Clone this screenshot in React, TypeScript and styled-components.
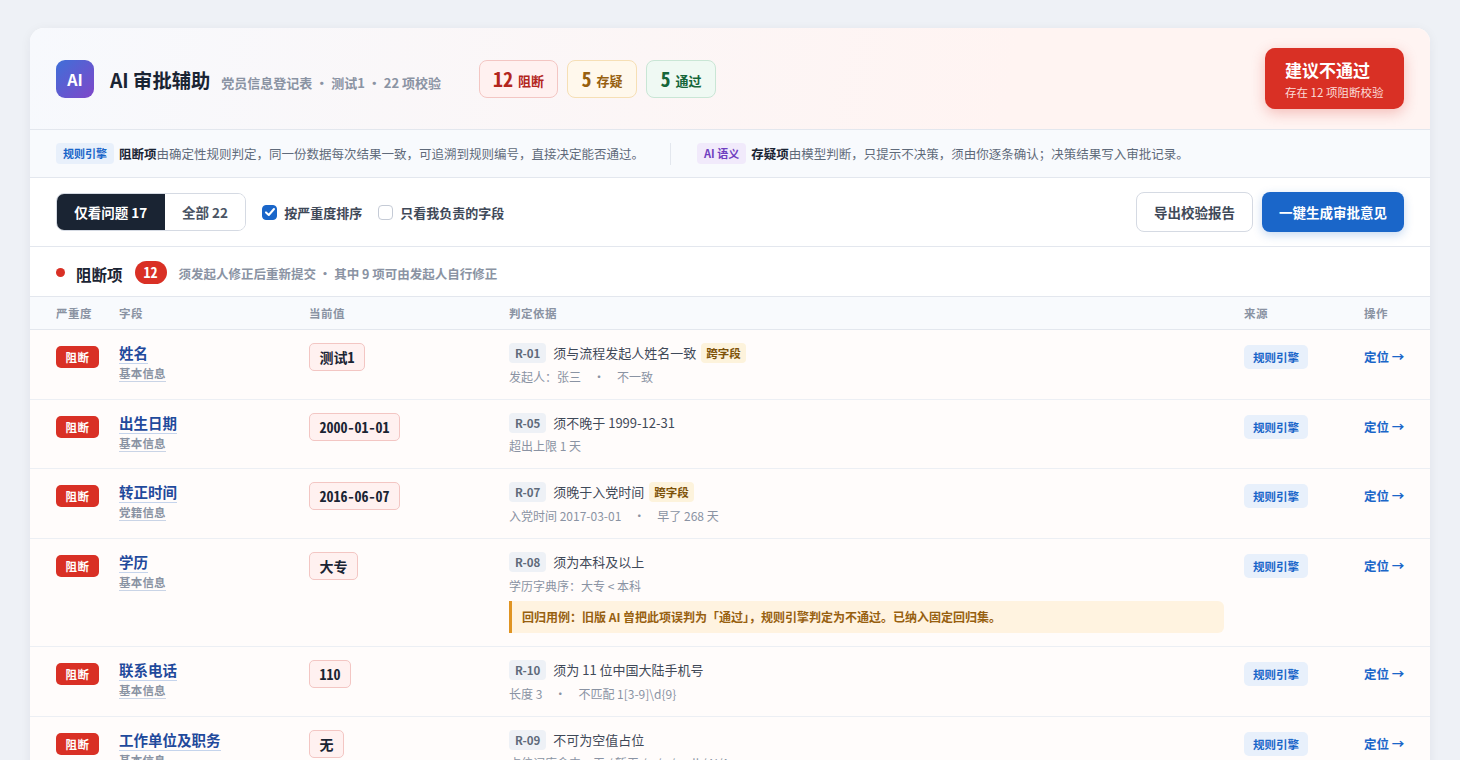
import React from "react";
import styled, { createGlobalStyle } from "styled-components";

const Global = createGlobalStyle`
  html, body { margin: 0; padding: 0; height: 760px; overflow: hidden; }
  body {
    background: #eef1f6;
    color: #1a2433;
    font-family: "Noto Sans CJK SC", "Noto Sans", sans-serif;
  }
  * { box-sizing: border-box; }
`;

const Page = styled.div`
  padding: 28px 30px;
`;

const Card = styled.div`
  background: #fff;
  border-radius: 14px;
  box-shadow: 0 2px 12px rgba(26, 36, 51, 0.06);
  overflow: hidden;
`;

const Header = styled.header`
  height: 102px;
  padding: 0 26px;
  display: flex;
  align-items: center;
  background: linear-gradient(100deg, #f7f9fd 0%, #fff4f2 70%, #fff4f2 100%);
  border-bottom: 1px solid #e3e7ee;
`;

const Logo = styled.div`
  width: 38px;
  height: 38px;
  border-radius: 9px;
  background: linear-gradient(135deg, #3f6fd8, #7f47c9);
  color: #fff;
  font-size: 16px;
  font-weight: 700;
  display: flex;
  align-items: center;
  justify-content: center;
`;

const TitleBlock = styled.div`
  display: flex;
  align-items: baseline;
  margin: 3px 0 0 16px;
`;

const Title = styled.h1`
  margin: 0;
  font-size: 19.3px;
  line-height: 28px;
  font-weight: 700;
  color: #1a2433;
`;

const Subtitle = styled.span`
  margin-left: 11px;
  font-size: 13px;
  font-weight: 600;
  color: #8a93a3;
  white-space: pre;
`;

const Stats = styled.div`
  display: flex;
  gap: 9px;
  margin-left: 38px;
`;

const tones = {
  red: { bg: "#fff1f0", line: "#f3c6c3", fg: "#b3261e" },
  amber: { bg: "#fff8ec", line: "#f6dfb5", fg: "#97600f" },
  green: { bg: "#eff9f3", line: "#c9e6d5", fg: "#17663a" },
};
type Tone = keyof typeof tones;

const Stat = styled.div<{ $tone: Tone }>`
  min-width: 70px;
  height: 38px;
  padding: 0 13px;
  display: flex;
  align-items: center;
  justify-content: center;
  gap: 5px;
  border-radius: 8px;
  border: 1px solid ${(p) => tones[p.$tone].line};
  background: ${(p) => tones[p.$tone].bg};
  color: ${(p) => tones[p.$tone].fg};
  font-size: 13px;
  font-weight: 700;
  b { font-size: 20px; font-weight: 700; line-height: 24px; font-feature-settings: "hwid"; }
  span { padding-top: 4px; }
`;

const Verdict = styled.div`
  margin-left: auto;
  width: 139px;
  height: 61px;
  padding: 0 20px;
  border-radius: 10px;
  background: #d93025;
  box-shadow: 0 4px 14px rgba(217, 48, 37, 0.28);
  color: #fff;
  display: flex;
  flex-direction: column;
  justify-content: center;
  strong { font-size: 17px; line-height: 24px; font-weight: 700; }
  span { margin-top: 2px; font-size: 11.5px; line-height: 16px; color: #fbdcd9; white-space: nowrap; }
`;

const Notes = styled.div`
  height: 48px;
  padding: 0 26px;
  display: flex;
  align-items: center;
  background: #f8fafd;
  border-bottom: 1px solid #e3e7ee;
  font-size: 12.5px;
  color: #5f6a7a;
`;

const NoteTag = styled.span<{ $ai?: boolean }>`
  padding: 0 7px;
  height: 21px;
  line-height: 21px;
  border-radius: 4px;
  font-size: 11px;
  font-weight: 700;
  margin-right: 5px;
  background: ${(p) => (p.$ai ? "#f1eafb" : "#e8f0fb")};
  color: ${(p) => (p.$ai ? "#6f3fc0" : "#1a66c9")};
`;

const NoteText = styled.span`
  b { color: #1a2433; font-weight: 700; }
`;

const NoteRule = styled.i`
  width: 1px;
  height: 22px;
  background: #e3e7ee;
  margin: 0 26px;
`;

const Toolbar = styled.div`
  height: 69px;
  padding: 0 26px;
  display: flex;
  align-items: center;
  border-bottom: 1px solid #e3e7ee;
`;

const Segments = styled.div`
  display: flex;
  height: 38px;
  border: 1px solid #d5dae3;
  border-radius: 8px;
  overflow: hidden;
`;

const Segment = styled.div<{ $on?: boolean }>`
  padding: 0 17.3px;
  display: flex;
  align-items: center;
  font-size: 13.5px;
  font-weight: 700;
  background: ${(p) => (p.$on ? "#1a2433" : "#fff")};
  color: ${(p) => (p.$on ? "#fff" : "#4a5464")};
`;

const Check = styled.label`
  display: flex;
  align-items: center;
  gap: 7px;
  margin-left: 16px;
  font-size: 13px;
  font-weight: 600;
  color: #3f4958;
`;

const Box = styled.span<{ $on?: boolean }>`
  width: 15px;
  height: 15px;
  border-radius: 4px;
  display: flex;
  align-items: center;
  justify-content: center;
  background: ${(p) => (p.$on ? "#1a66c9" : "#fff")};
  border: 1px solid ${(p) => (p.$on ? "#1a66c9" : "#c5cbd6")};
`;

const Actions = styled.div`
  margin-left: auto;
  display: flex;
  gap: 9px;
`;

const Button = styled.button<{ $primary?: boolean }>`
  height: 40px;
  padding: 0 17px;
  border-radius: 8px;
  font-family: inherit;
  font-size: 13.5px;
  font-weight: 700;
  border: ${(p) => (p.$primary ? "none" : "1px solid #d5dae3")};
  background: ${(p) => (p.$primary ? "#1a66c9" : "#fff")};
  color: ${(p) => (p.$primary ? "#fff" : "#3f4958")};
  box-shadow: ${(p) => (p.$primary ? "0 3px 10px rgba(26,102,201,.25)" : "none")};
`;

const SectionHead = styled.div`
  height: 50px;
  padding: 4px 26px 0;
  display: flex;
  align-items: center;
  border-bottom: 1px solid #e3e7ee;
`;

const Dot = styled.i`
  width: 9px;
  height: 9px;
  border-radius: 50%;
  background: #d93025;
  margin: -2px 11px 0 0;
`;

const SectionTitle = styled.h2`
  margin: 0;
  font-size: 15.5px;
  font-weight: 700;
  color: #1a2433;
`;

const CountPill = styled.span`
  margin: -2px 0 0 12px;
  width: 32px;
  height: 23px;
  border-radius: 12px;
  background: #d93025;
  color: #fff;
  font-size: 14px;
  font-weight: 700;
  line-height: 23px;
  text-align: center;
  font-feature-settings: "hwid";
`;

const SectionNote = styled.span`
  margin-left: 12px;
  font-size: 12.5px;
  font-weight: 600;
  color: #8a93a3;
  white-space: pre;
`;

const columns = "63px 190px 200px 735px 120px 40px";

const TableHead = styled.div`
  height: 33px;
  padding: 0 26px;
  display: grid;
  grid-template-columns: ${columns};
  align-items: center;
  background: #f8fafd;
  border-bottom: 1px solid #e3e7ee;
  font-size: 11.5px;
  font-weight: 600;
  letter-spacing: 0.5px;
  color: #8a93a3;
  white-space: nowrap;
`;

const Row = styled.div`
  padding: 12px 26px 13.2px;
  display: grid;
  grid-template-columns: ${columns};
  align-items: start;
  background: #fffcfb;
  border-bottom: 1px solid #eceff4;
`;

const Severity = styled.span`
  justify-self: start;
  margin-top: 4px;
  width: 43px;
  height: 22px;
  border-radius: 5px;
  background: #d93025;
  color: #fff;
  font-size: 11.5px;
  font-weight: 700;
  line-height: 22px;
  text-align: center;
  letter-spacing: 0.5px;
`;

const Field = styled.div`
  display: flex;
  flex-direction: column;
  align-items: flex-start;
`;

const FieldName = styled.span`
  font-size: 14.5px;
  font-weight: 700;
  line-height: 21px;
  color: #1f4a9c;
  border-bottom: 1px solid #c5d4ec;
`;

const FieldGroup = styled.span`
  margin-top: 2px;
  font-size: 11.5px;
  letter-spacing: 0.2px;
  font-weight: 600;
  line-height: 15px;
  color: #8a93a3;
  border-bottom: 1px solid #c9d4e6;
`;

const Value = styled.span`
  justify-self: start;
  margin-top: 1px;
  height: 28px;
  padding: 0 9.5px;
  border-radius: 5px;
  border: 1px solid #f3c6c3;
  background: #fff1f0;
  font-size: 14px;
  font-weight: 700;
  line-height: 26px;
  color: #1a2433;
  font-feature-settings: "hwid";
`;

const Basis = styled.div`
  padding-right: 20px;
  min-width: 0;
`;

const RuleLine = styled.div`
  display: flex;
  align-items: center;
  height: 20px;
  margin-top: 1px;
  font-size: 13px;
  color: #3f4958;
`;

const RuleText = styled.span`
  margin-top: -1px;
`;

const RuleId = styled.span`
  height: 20px;
  padding: 0 6px;
  margin-right: 7px;
  border-radius: 4px;
  background: #eef1f6;
  color: #5f6a7a;
  font-size: 11.5px;
  font-weight: 700;
  line-height: 20px;
`;

const CrossTag = styled.span`
  height: 20px;
  padding: 0 5px;
  margin-left: 5px;
  border-radius: 4px;
  background: #fdf3dc;
  color: #7d5208;
  font-size: 11.5px;
  font-weight: 700;
  line-height: 20px;
`;

const Detail = styled.div`
  margin-top: 4.5px;
  font-size: 12px;
  line-height: 18px;
  color: #8a93a3;
  white-space: pre;
`;

const Sep = styled.span`
  margin: 0 12px;
`;

const Regression = styled.div`
  margin-top: 6.5px;
  height: 32px;
  padding: 0 10px 1px;
  display: flex;
  align-items: center;
  border-left: 3px solid #e09422;
  border-radius: 0 6px 6px 0;
  background: #fff3e0;
  color: #97600f;
  font-size: 12px;
  font-weight: 700;
`;

const Source = styled.span`
  justify-self: start;
  margin-top: 3px;
  height: 24px;
  padding: 0 9px;
  border-radius: 5px;
  background: #e8f0fb;
  color: #1a66c9;
  font-size: 11.5px;
  font-weight: 700;
  line-height: 24px;
`;

const Locate = styled.a`
  margin-top: 5px;
  font-size: 12.5px;
  font-weight: 700;
  line-height: 20px;
  color: #1a66c9;
  white-space: nowrap;
`;

type Item = {
  name: string;
  group: string;
  value: string;
  rule: string;
  text: string;
  cross?: boolean;
  detail: string[];
  regression?: string;
};

const items: Item[] = [
  { name: "姓名", group: "基本信息", value: "测试1", rule: "R-01", text: "须与流程发起人姓名一致", cross: true, detail: ["发起人：张三", "不一致"] },
  { name: "出生日期", group: "基本信息", value: "2000-01-01", rule: "R-05", text: "须不晚于 1999-12-31", detail: ["超出上限 1 天"] },
  { name: "转正时间", group: "党籍信息", value: "2016-06-07", rule: "R-07", text: "须晚于入党时间", cross: true, detail: ["入党时间 2017-03-01", "早了 268 天"] },
  {
    name: "学历",
    group: "基本信息",
    value: "大专",
    rule: "R-08",
    text: "须为本科及以上",
    detail: ["学历字典序：大专 < 本科"],
    regression: "回归用例：旧版 AI 曾把此项误判为「通过」，规则引擎判定为不通过。已纳入固定回归集。",
  },
  { name: "联系电话", group: "基本信息", value: "110", rule: "R-10", text: "须为 11 位中国大陆手机号", detail: ["长度 3", "不匹配 1[3-9]\\d{9}"] },
  { name: "工作单位及职务", group: "基本信息", value: "无", rule: "R-09", text: "不可为空值占位", detail: ["占位词库命中：无 / 暂无 / n/a / null / N/A"] },
];

export default function App() {
  return (
    <Page>
      <Global />
      <Card>
        <Header>
          <Logo>AI</Logo>
          <TitleBlock>
            <Title>AI 审批辅助</Title>
            <Subtitle>党员信息登记表 ・ 测试1 ・ 22 项校验</Subtitle>
          </TitleBlock>
          <Stats>
            <Stat $tone="red"><b>12</b><span>阻断</span></Stat>
            <Stat $tone="amber"><b>5</b><span>存疑</span></Stat>
            <Stat $tone="green"><b>5</b><span>通过</span></Stat>
          </Stats>
          <Verdict>
            <strong>建议不通过</strong>
            <span>存在 12 项阻断校验</span>
          </Verdict>
        </Header>
        <Notes>
          <NoteTag>规则引擎</NoteTag>
          <NoteText><b>阻断项</b>由确定性规则判定，同一份数据每次结果一致，可追溯到规则编号，直接决定能否通过。</NoteText>
          <NoteRule />
          <NoteTag $ai>AI 语义</NoteTag>
          <NoteText><b>存疑项</b>由模型判断，只提示不决策，须由你逐条确认；决策结果写入审批记录。</NoteText>
        </Notes>
        <Toolbar>
          <Segments>
            <Segment $on>仅看问题 17</Segment>
            <Segment>全部 22</Segment>
          </Segments>
          <Check>
            <Box $on>
              <svg width="12" height="12" viewBox="0 0 12 12" fill="none">
                <path d="M2 6.4 4.8 9 10 3" stroke="#fff" strokeWidth="2" strokeLinecap="round" strokeLinejoin="round" />
              </svg>
            </Box>
            按严重度排序
          </Check>
          <Check>
            <Box />
            只看我负责的字段
          </Check>
          <Actions>
            <Button>导出校验报告</Button>
            <Button $primary>一键生成审批意见</Button>
          </Actions>
        </Toolbar>
        <SectionHead>
          <Dot />
          <SectionTitle>阻断项</SectionTitle>
          <CountPill>12</CountPill>
          <SectionNote>须发起人修正后重新提交 ・ 其中 9 项可由发起人自行修正</SectionNote>
        </SectionHead>
        <TableHead>
          <span>严重度</span>
          <span>字段</span>
          <span>当前值</span>
          <span>判定依据</span>
          <span>来源</span>
          <span>操作</span>
        </TableHead>
        {items.map((item) => (
          <Row key={item.rule}>
            <Severity>阻断</Severity>
            <Field>
              <FieldName>{item.name}</FieldName>
              <FieldGroup>{item.group}</FieldGroup>
            </Field>
            <Value>{item.value}</Value>
            <Basis>
              <RuleLine>
                <RuleId>{item.rule}</RuleId>
                <RuleText>{item.text}</RuleText>
                {item.cross && <CrossTag>跨字段</CrossTag>}
              </RuleLine>
              <Detail>
                {item.detail[0]}
                {item.detail[1] && <><Sep>・</Sep>{item.detail[1]}</>}
              </Detail>
              {item.regression && <Regression>{item.regression}</Regression>}
            </Basis>
            <Source>规则引擎</Source>
            <Locate>定位 →</Locate>
          </Row>
        ))}
      </Card>
    </Page>
  );
}
